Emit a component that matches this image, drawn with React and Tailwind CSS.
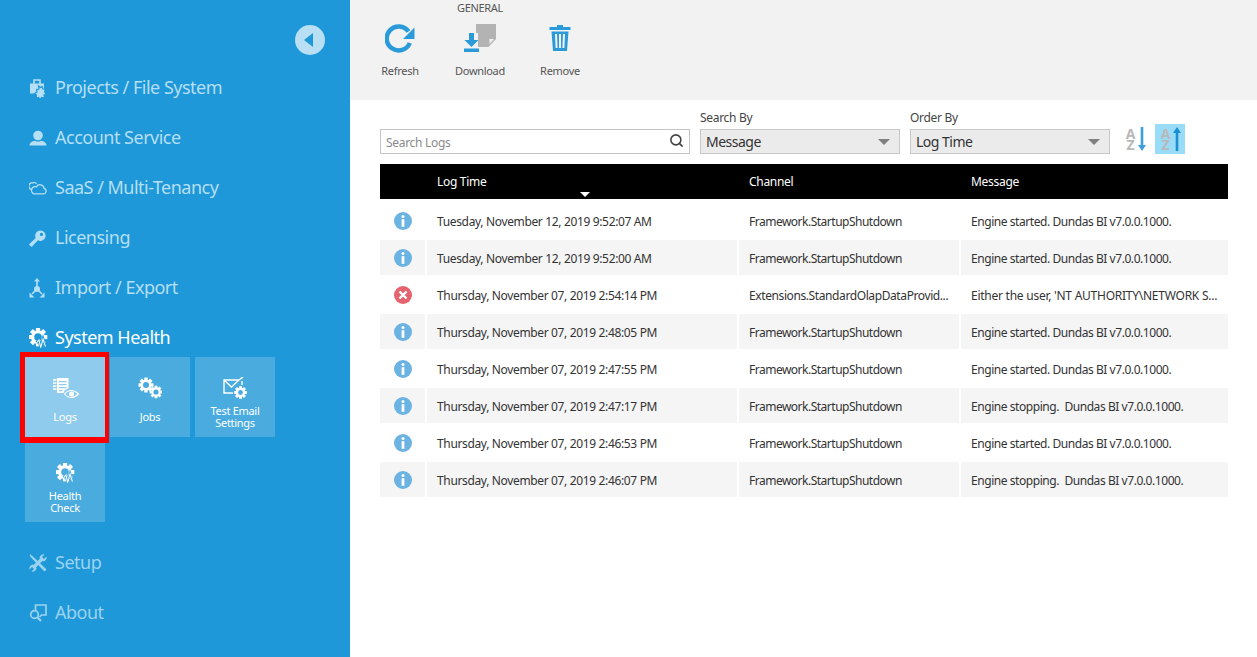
import { Search } from "lucide-react";

const font = "font-['Open_Sans','Noto_Sans',sans-serif]";
const NAV_BG = "#1e98d8";
const TILE_BG = "#4aabdf";

function ProjectsIcon() {
  return (
    <svg viewBox="0 0 18 21" className="w-[18px] h-[21px]">
      <path d="M5 6V2h6v4" fill="none" stroke="currentColor" strokeWidth="1.600" />
      <rect x="1" y="5.500" width="14" height="10" fill="currentColor" />
      <path fill="currentColor" stroke={NAV_BG} strokeWidth="1.200" d="M9.500 8l2 1.500 1.500-1 1 2.500 2.500.5-1 2.500 2 1.500-2.500 1.500.5 3-3-.5-1 2-2-2-2.500.5.500-3-2-1.500 2.500-1.500-.5-2.500 2.500-.5z" />
    </svg>
  );
}

function AccountIcon() {
  return (
    <svg viewBox="0 0 18 16" className="w-[18px] h-[16px]" fill="currentColor">
      <circle cx="9" cy="5.500" r="4.800" />
      <path d="M0.500 15.500c0-2.800 2.500-4.300 5.500-4.800 1.800 1.200 4.200 1.200 6 0 3 .5 5.500 2 5.500 4.800z" />
    </svg>
  );
}

function CloudIcon() {
  return (
    <svg viewBox="0 0 18 14" className="w-[18px] h-[14px]" fill="none" stroke="currentColor" strokeWidth="1.300">
      <path d="M5 12.800h9.500a2.800 2.800 0 0 0 .5-5.500 4 4 0 0 0-7.500-1.500 3.600 3.600 0 0 0-2.500 7z" />
      <path d="M2.800 8.500a3 3 0 0 1 .7-6.500 3 3 0 0 1 4 .8" />
    </svg>
  );
}

function KeyIcon() {
  return (
    <svg viewBox="0 0 18 18" className="w-[17px] h-[17px]" fill="currentColor">
      <path fillRule="evenodd" d="M12 0.500a5.500 5.500 0 1 1-2.600 10.300L3.800 17a1.500 1.500 0 0 1-2.300 0l-.6-.6a1.500 1.500 0 0 1 0-2.200l6.200-5.800A5.500 5.500 0 0 1 12 0.500zm1.200 2.500a1.700 1.700 0 1 0 0 3.400 1.700 1.700 0 0 0 0-3.400z" />
    </svg>
  );
}

function ImportIcon() {
  return (
    <svg viewBox="0 0 16 20" className="w-[16px] h-[20px]" fill="currentColor" stroke="currentColor">
      <path d="M8 0l3 3.500H5z" stroke="none" />
      <path d="M8 3v8M8 11l-5 5M8 11l5 5" strokeWidth="1.600" />
      <circle cx="8" cy="11" r="3" stroke="none" />
      <path d="M0.500 14.500v5h5zM15.500 14.500v5h-5z" stroke="none" />
    </svg>
  );
}

function Gear({ cx, cy, r, hole, holeColor = TILE_BG }) {
  const teeth = [0, 45, 90, 135];
  return (
    <g>
      {teeth.map((a) => (
        <rect key={a} x={cx - r * 0.26} y={cy - r * 1.15} width={r * 0.52} height={r * 2.3} fill="currentColor" transform={`rotate(${a} ${cx} ${cy})`} />
      ))}
      <circle cx={cx} cy={cy} r={r * 0.85} fill="currentColor" />
      <circle cx={cx} cy={cy} r={hole} fill={holeColor} />
    </g>
  );
}

function HealthIcon({ bg = NAV_BG }) {
  return (
    <svg viewBox="0 0 20 22" className="w-[19px] h-[21px]">
      <Gear cx={9.500} cy={9.500} r={8.500} hole={4} holeColor={bg} />
      <path fill="none" stroke={bg} strokeWidth="3" d="M8 15.500l2.500-3 1.800 8 2.500-9 2.500 8" />
      <path fill="none" stroke="currentColor" strokeWidth="1.100" d="M8 15.500l2.500-3 1.800 8 2.500-9 2.500 8" />
    </svg>
  );
}

function SetupIcon() {
  return (
    <svg viewBox="0 0 18 18" className="w-[18px] h-[18px]" fill="currentColor">
      <path d="M1.500 0.500L4.500 3 15.500 13.500 17.500 15.500 15.500 17.500 13.500 15.500 3 4.500 .5 1.500z" />
      <path stroke="currentColor" strokeWidth="3.400" d="M13 5L5 13" />
      <path d="M10.500 4a4 4 0 0 1 5-3.500L13 3l2 2 2.500-2.500A4 4 0 0 1 14 7.500z" />
      <path d="M7.500 14a4 4 0 0 1-5 3.500L5 15l-2-2-2.500 2.500A4 4 0 0 1 4 10.500z" />
    </svg>
  );
}

function AboutIcon() {
  return (
    <svg viewBox="0 0 18 18" className="w-[18px] h-[18px]" fill="none" stroke="currentColor" strokeWidth="1.700">
      <path d="M6.500 6V1h10.500v10h-4.500l-2 2" />
      <circle cx="5.500" cy="10.500" r="3.800" />
      <path d="M8.500 13.500l3.500 3.500" strokeWidth="2.200" />
    </svg>
  );
}

function LogsIcon() {
  return (
    <svg viewBox="0 0 27 22" className="w-[27px] h-[22px]">
      <path fill="currentColor" fillRule="evenodd" d="M5 1h11.500v10.500a6 6 0 0 0-5 4.500H5zM7 4v1.200h7.500V4zm0 3v1.200h7.500V7zm0 3v1.200h7.500V10zm0 3v1.200h3.500V13z" />
      <path stroke="currentColor" strokeWidth="1.400" d="M1 3h3.500M1 6h3.500M1 9h3.500M1 12h3.500" />
      <path fill="none" stroke="currentColor" strokeWidth="1.100" d="M12.500 17c3.500-4.600 9.500-4.600 14 0-4.500 4.600-10.500 4.600-14 0z" />
      <circle cx="19.500" cy="17" r="2.500" fill="currentColor" />
    </svg>
  );
}

function JobsIcon() {
  return (
    <svg viewBox="0 0 24 22" className="w-[24px] h-[22px]">
      <Gear cx={8} cy={8} r={6.500} hole={3} />
      <Gear cx={18} cy={15} r={5.500} hole={2.600} />
    </svg>
  );
}

function MailIcon() {
  return (
    <svg viewBox="0 0 24 22" className="w-[24px] h-[22px]">
      <path fill="none" stroke="currentColor" strokeWidth="1.400" d="M10 16H1V3h15l-7.500 7L1 3M16 3l4-3M19 4v4" />
      <Gear cx={17.500} cy={15.500} r={5.500} hole={2.400} />
    </svg>
  );
}

function RefreshIcon() {
  return (
    <svg viewBox="0 0 30 30" className="w-[30px] h-[30px]">
      <path fill="none" stroke="#2b9ad9" strokeWidth="4.500" d="M24.800 20a12 12 0 1 1-1.300-11.500" />
      <path fill="#2b9ad9" d="M29.500 4.500V16H18z" />
    </svg>
  );
}

function DownloadIcon() {
  return (
    <svg viewBox="0 0 34 30" className="w-[34px] h-[30px]">
      <path fill="#b3b3b3" d="M13 1h20v15l-7.500 8H15V10h-2z" />
      <path fill="#f2f2f2" d="M26.500 16h4.500l-4.500 5z" />
      <path fill="#2b9ad9" d="M6 10h5v7h4.500l-7 7-7-7H6zM1 25.500h15V29H1z" />
    </svg>
  );
}

function TrashIcon() {
  return (
    <svg viewBox="0 0 22 26" className="w-[22px] h-[26px]" fill="#2b9ad9">
      <path d="M8 0h6v2h7.500v3H.5V2H8z" />
      <path fillRule="evenodd" d="M2.500 6.500h17L18 26H4zM6 9l.6 14h2L8 9zm4 0v14h2V9zm4 0l-.6 14h2L16 9z" />
    </svg>
  );
}

function InfoIcon() {
  return (
    <svg viewBox="0 0 18 18" className="w-[18px] h-[18px]">
      <circle cx="9" cy="9" r="9" fill="#6bb3e3" />
      <circle cx="9" cy="4.600" r="1.500" fill="#fff" />
      <rect x="7.600" y="7.200" width="2.800" height="7.600" fill="#fff" />
    </svg>
  );
}

function ErrorIcon() {
  return (
    <svg viewBox="0 0 18 18" className="w-[18px] h-[18px]">
      <circle cx="9" cy="9" r="9" fill="#e5636e" />
      <path d="M5.500 5.500l7 7M12.500 5.500l-7 7" stroke="#fff" strokeWidth="2.400" />
    </svg>
  );
}

const navTop = [
  { label: "Projects / File System", icon: <ProjectsIcon /> },
  { label: "Account Service", icon: <AccountIcon /> },
  { label: "SaaS / Multi-Tenancy", icon: <CloudIcon /> },
  { label: "Licensing", icon: <KeyIcon /> },
  { label: "Import / Export", icon: <ImportIcon /> },
];

const rows = [
  ["info", "Tuesday, November 12, 2019 9:52:07 AM", "Framework.StartupShutdown", "Engine started. Dundas BI v7.0.0.1000."],
  ["info", "Tuesday, November 12, 2019 9:52:00 AM", "Framework.StartupShutdown", "Engine started. Dundas BI v7.0.0.1000."],
  ["error", "Thursday, November 07, 2019 2:54:14 PM", "Extensions.StandardOlapDataProvid...", "Either the user, 'NT AUTHORITY\\NETWORK S..."],
  ["info", "Thursday, November 07, 2019 2:48:05 PM", "Framework.StartupShutdown", "Engine started. Dundas BI v7.0.0.1000."],
  ["info", "Thursday, November 07, 2019 2:47:55 PM", "Framework.StartupShutdown", "Engine started. Dundas BI v7.0.0.1000."],
  ["info", "Thursday, November 07, 2019 2:47:17 PM", "Framework.StartupShutdown", "Engine stopping.  Dundas BI v7.0.0.1000."],
  ["info", "Thursday, November 07, 2019 2:46:53 PM", "Framework.StartupShutdown", "Engine started. Dundas BI v7.0.0.1000."],
  ["info", "Thursday, November 07, 2019 2:46:07 PM", "Framework.StartupShutdown", "Engine stopping.  Dundas BI v7.0.0.1000."],
];

function NavItem({ icon, label, color = "text-[#b5dff5]", height = "h-[50px]" }) {
  return (
    <div className={`flex items-center pl-[29px] ${height} ${color}`}>
      <span className="w-[26px] flex items-center">{icon}</span>
      <span className="pb-[1px] text-[18px] tracking-[-0.5px] whitespace-nowrap">{label}</span>
    </div>
  );
}

function Tile({ icon, label, active }) {
  return (
    <div className={`relative w-[80px] h-[80px] flex flex-col items-center pt-[19px] text-white ${active ? "bg-[#8fcbec]" : "bg-[#4aabdf]"}`}>
      <div className="h-[24px] flex items-center justify-center">{icon}</div>
      <div className="mt-[5px] h-[24px] w-[62px] flex items-center justify-center text-center text-[11px] leading-[12px] tracking-[-0.3px]">{label}</div>
      {active && <div className="absolute -left-[5px] -top-[5px] -right-[4px] -bottom-[6px] z-10 border-[#ff0000] border-t-[5px] border-l-[5px] border-r-[4px] border-b-[6px]" />}
    </div>
  );
}

function ToolButton({ icon, label }) {
  return (
    <div className="w-[80px] flex flex-col items-center">
      <div className="h-[34px] flex items-center justify-center">{icon}</div>
      <div className="mt-[9px] text-[11px] leading-[14px] tracking-[-0.3px] text-[#555]">{label}</div>
    </div>
  );
}

function Select({ label, value }) {
  return (
    <div className="w-[200px]">
      <div className="text-[12px] leading-[16px] tracking-[-0.3px] text-[#444] mb-[3px]">{label}</div>
      <div className="h-[25px] flex items-center justify-between pl-[5px] pr-[6px] bg-[#ebebeb] border border-[#c8c8c8] text-[14px] tracking-[-0.5px] text-[#333]">
        <span>{value}</span>
        <span className="mr-[3px] border-x-[6px] border-x-transparent border-t-[6px] border-t-[#808080]" />
      </div>
    </div>
  );
}

function SortIcon({ up, active }) {
  return (
    <div className={`h-[30px] w-[30px] flex items-center justify-center gap-[1px] ${active ? "bg-[#99dcf8]" : ""}`}>
      <div className="w-[12px] text-center text-[14px] leading-[11px] font-bold text-[#b9b9b9]">A Z</div>
      <svg viewBox="0 0 8 24" className="w-[8px] h-[24px]" fill={up ? "#1c8fd1" : "#3d9fdc"}>
        {up ? <path d="M4 0l4 6H5.300v18H2.700V6H0z" /> : <path d="M2.700 0h2.600v18H8l-4 6-4-6h2.700z" />}
      </svg>
    </div>
  );
}

export default function App() {
  return (
    <div className={`flex h-[657px] w-[1257px] overflow-hidden bg-white ${font}`}>
      <aside className="w-[350px] shrink-0 bg-[#1e98d8]">
        <div className="flex justify-end pr-[25px] pt-[25px] mb-[8px]">
          <div className="w-[30px] h-[30px] rounded-full bg-[#b9dff4] flex items-center justify-center">
            <span className="mr-[3px] border-y-[7px] border-y-transparent border-r-[9px] border-r-[#1e98d8]" />
          </div>
        </div>
        {navTop.map((n) => (
          <NavItem key={n.label} icon={n.icon} label={n.label} />
        ))}
        <NavItem icon={<HealthIcon />} label="System Health" color="text-white" height="h-[44px] pt-[6px]" />
        <div className="pl-[25px] grid grid-cols-[80px_80px_80px] gap-[5px]">
          <Tile icon={<LogsIcon />} label="Logs" active />
          <Tile icon={<JobsIcon />} label="Jobs" />
          <Tile icon={<MailIcon />} label="Test Email Settings" />
          <Tile icon={<HealthIcon bg={TILE_BG} />} label="Health Check" />
        </div>
        <div className="mt-[16px]">
          <NavItem icon={<SetupIcon />} label="Setup" color="text-[#9bd3f0]" />
          <NavItem icon={<AboutIcon />} label="About" color="text-[#9bd3f0]" />
        </div>
      </aside>

      <main className="flex-1 min-w-0">
        <div className="h-[100px] bg-[#f2f2f2] pl-[10px]">
          <div className="w-[240px] text-center text-[11px] leading-[15px] tracking-[-0.3px] text-[#555]">GENERAL</div>
          <div className="flex mt-[6px]">
            <ToolButton icon={<RefreshIcon />} label="Refresh" />
            <ToolButton icon={<DownloadIcon />} label="Download" />
            <ToolButton icon={<TrashIcon />} label="Remove" />
          </div>
        </div>

        <div className="pl-[30px] pr-[29px]">
          <div className="flex items-end mt-[10px] h-[44px]">
            <div className="w-[310px] h-[25px] flex items-center justify-between pl-[5px] pr-[5px] border border-[#c4c4c4]">
              <span className="pt-[2px] text-[12px] tracking-[-0.3px] text-[#8a8a8a]">Search Logs</span>
              <Search size={15} strokeWidth={2.500} className="mb-[3px] text-[#444]" />
            </div>
            <div className="ml-[10px]"><Select label="Search By" value="Message" /></div>
            <div className="ml-[10px]"><Select label="Order By" value="Log Time" /></div>
            <div className="ml-[10px] flex gap-[5px]"><SortIcon /><SortIcon up active /></div>
          </div>

          <div className="mt-[10px] h-[35px] bg-black text-white grid grid-cols-[45px_310px_220px_267px] gap-x-[2px] items-center text-[12px] tracking-[-0.3px]">
            <div />
            <div className="relative pl-[10px]">
              Log Time
              <span className="absolute left-[153px] top-[19px] border-x-[5px] border-x-transparent border-t-[5px] border-t-white" />
            </div>
            <div className="pl-[10px]">Channel</div>
            <div className="pl-[10px]">Message</div>
          </div>

          <div className="mt-[4px] flex flex-col gap-y-[2px]">
            {rows.map((r, i) => {
              const bg = i % 2 === 1 ? "bg-[#f5f5f5]" : "bg-white";
              const isError = r[0] === "error";
              return (
                <div key={i} className="grid grid-cols-[45px_310px_220px_267px] gap-x-[2px] h-[35px] text-[12px] tracking-[-0.35px] text-[#333]">
                  <div className={`${bg} flex items-center justify-center`}>{isError ? <ErrorIcon /> : <InfoIcon />}</div>
                  <div className={`${bg} flex items-center pl-[10px] pt-[2px] whitespace-nowrap`}>{r[1]}</div>
                  <div className={`${bg} flex items-center pl-[10px] pt-[2px] whitespace-pre overflow-hidden ${isError ? "tracking-[-0.4px]" : "tracking-[-0.5px]"}`}>{r[2]}</div>
                  <div className={`${bg} flex items-center pl-[10px] pt-[2px] whitespace-pre overflow-hidden ${isError ? "tracking-[-0.25px]" : "tracking-[-0.44px]"}`}>{r[3]}</div>
                </div>
              );
            })}
          </div>
        </div>
      </main>
    </div>
  );
}
